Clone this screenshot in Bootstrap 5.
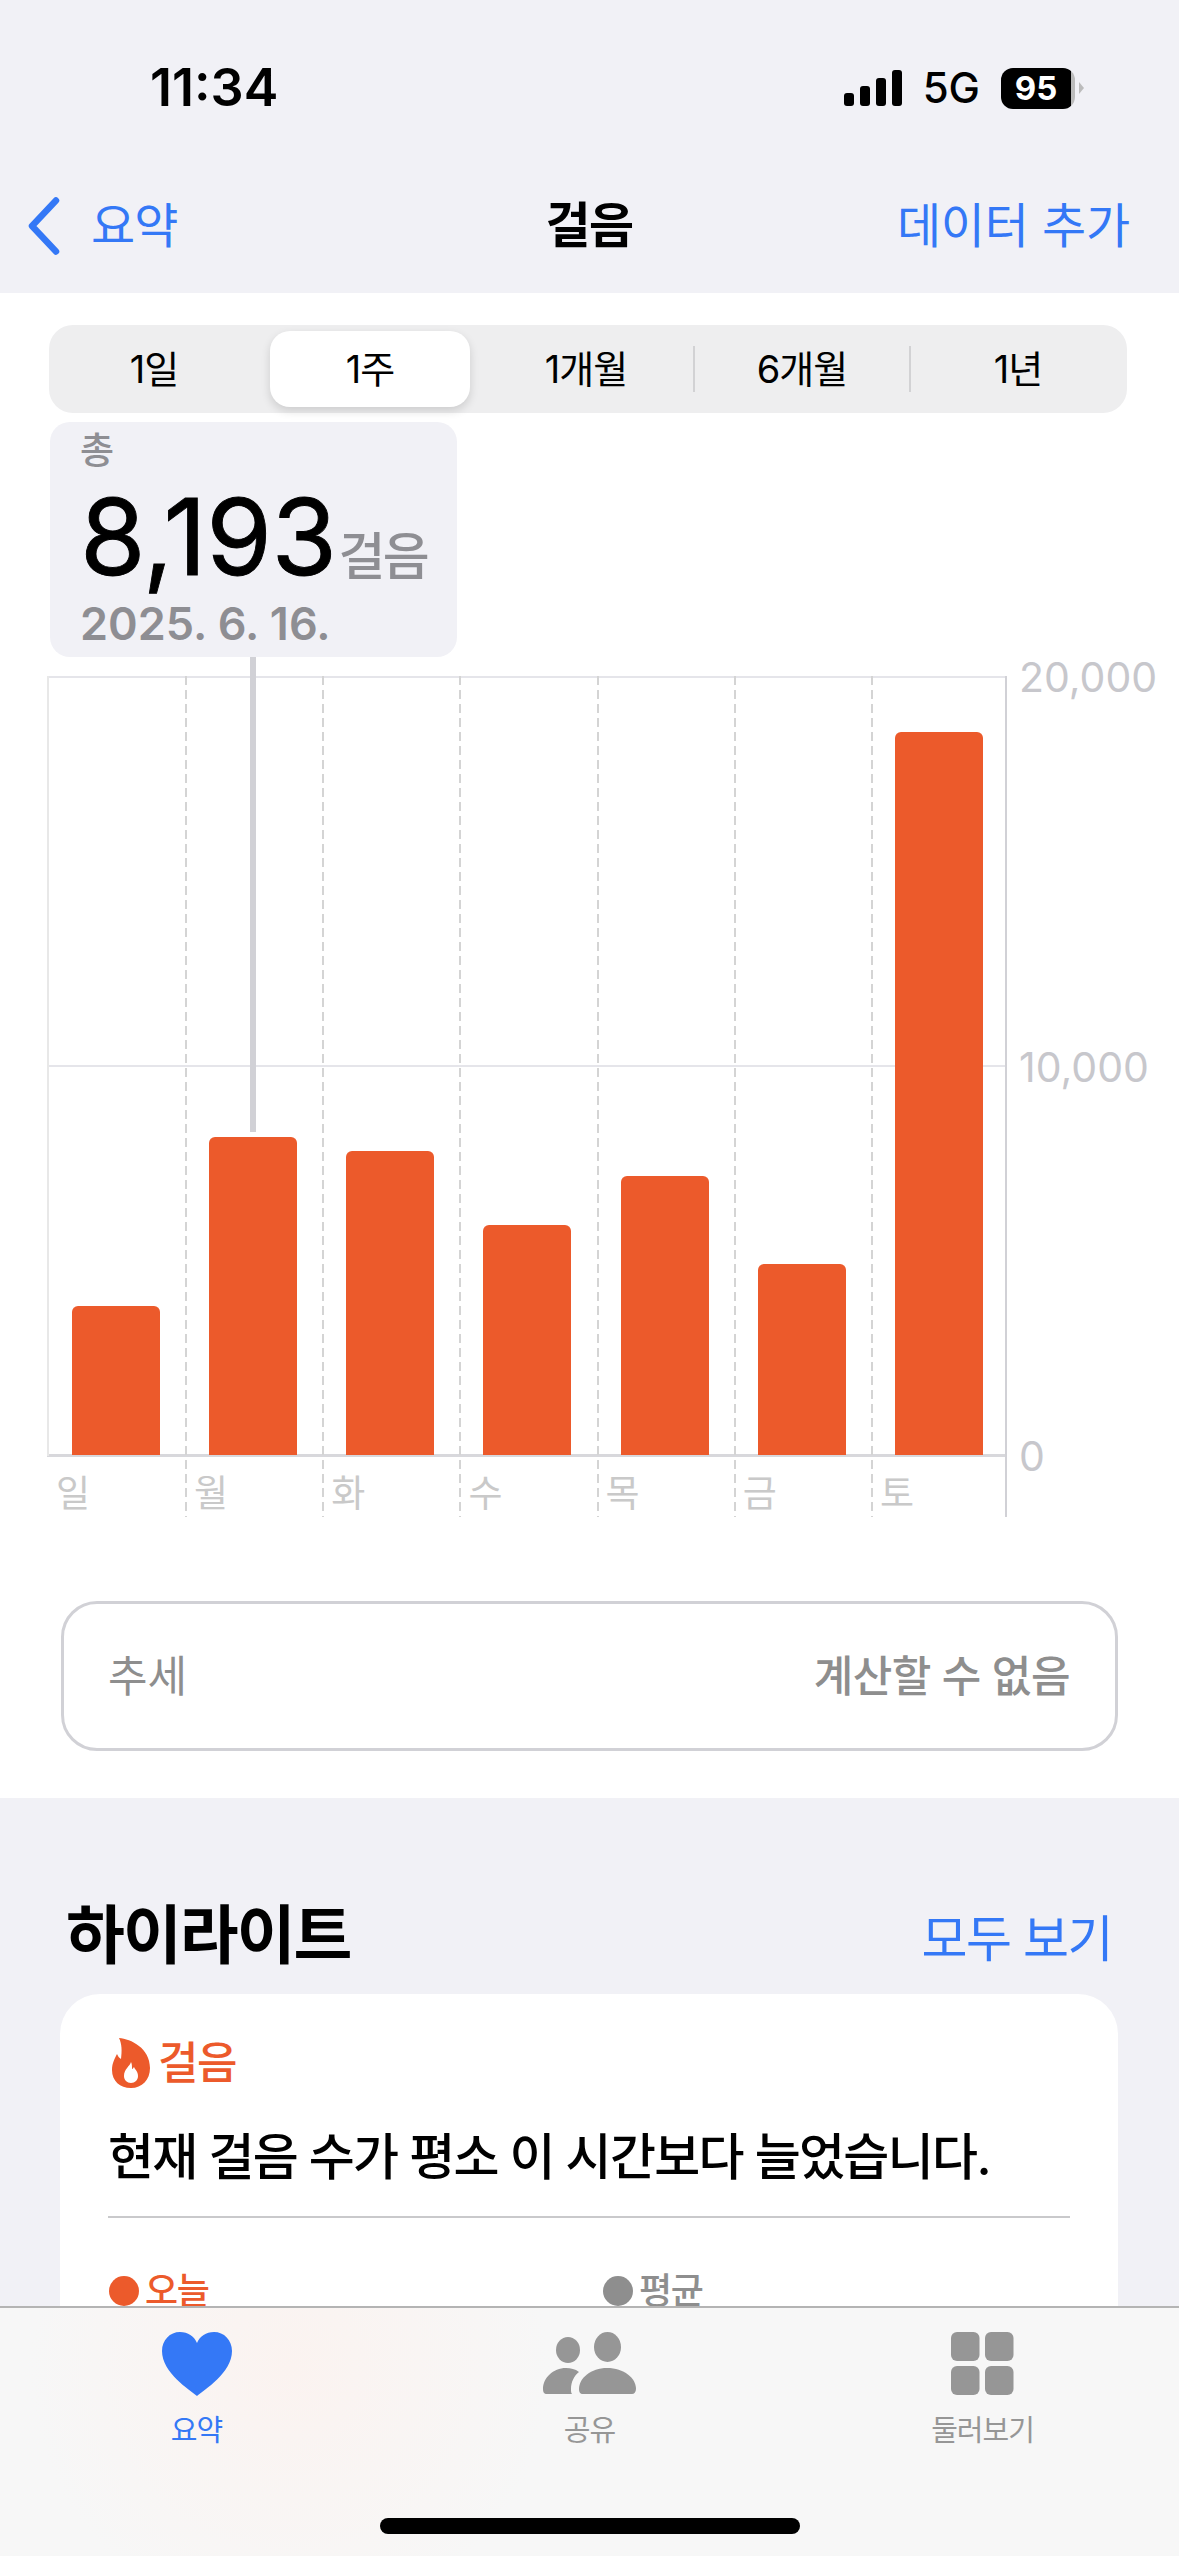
<!doctype html>
<html lang="ko">
<head>
<meta charset="utf-8">
<link href="https://cdn.jsdelivr.net/npm/bootstrap@5.3.0/dist/css/bootstrap.min.css" rel="stylesheet">
<style>
html,body{margin:0;width:1179px;height:2556px;overflow:hidden}
body{background:#f1f1f6;color:#000;font-family:Inter,"Noto Sans CJK KR",sans-serif;position:relative}
.status-row{height:176px;padding:0 95px 0 150px}
.clock{font-size:52px;font-weight:600;letter-spacing:0;line-height:1}
.sig{gap:6px;margin-right:21px}
.sig i{display:block;width:10px;background:#000;border-radius:3px}
.net{font-size:42px;font-weight:500;line-height:1;margin-right:21px}
.batt{width:74px;height:41px;border-radius:12px;background:linear-gradient(90deg,#000 0 70px,#bcbcbc 70px);color:#fff;font-size:33px;font-weight:700;line-height:41px;padding-right:4px;text-align:center}
.batt-tip{width:0;height:0;border-left:5px solid #bcbcbc;border-top:6px solid transparent;border-bottom:6px solid transparent;margin-left:4px}
.navrow{height:117px;padding:0 49px 18px 28px}
.nav-side{flex:1 1 0}
.blue{color:#3478f6}
.nav-txt{font-size:48px;letter-spacing:-.2px;line-height:1}
.nav-back{letter-spacing:-1px}
.nav-title{font-size:49px;font-weight:600;letter-spacing:-1.5px;line-height:1;margin-left:20px}
.chev{margin-right:31px}
.sheet{background:#fff;height:1505px;padding-top:32px}
.seg{width:1078px;height:88px;margin-left:49px;background:#eeeeef;border-radius:24px;position:relative}
.seg-item{width:216px;font-size:38px;letter-spacing:-1px;line-height:1;position:relative;text-align:center}
.seg-item:first-child{margin-left:-3px}
.seg-item.on{background:#fff;border-radius:20px;width:200px;height:76px;margin:0 8px;box-shadow:0 4px 10px rgba(0,0,0,.14)}
.seg-sep{width:2px;height:46px;background:#d2d2d4;flex:none;margin:0 -1px}
.tip{width:407px;height:235px;margin:9px 0 0 50px;background:#f1f1f6;border-radius:20px;padding:9px 0 0 30px}
.tip-lab{font-size:37px;line-height:40px;color:#8e8e93;font-weight:500}
.tip-val{font-size:106px;line-height:100px;margin-top:16px;letter-spacing:-.5px;font-weight:400;white-space:nowrap;-webkit-text-stroke:.9px #000}
.tip-unit{font-size:51px;line-height:40px;color:#8e8e93;font-weight:500;letter-spacing:-2.5px;margin-left:2px;-webkit-text-stroke:0}
.tip-date{font-size:45px;line-height:50px;color:#8e8e93;font-weight:600;margin-top:12px;white-space:nowrap}
.chart{margin:19px 0 0 47px;position:relative;width:1121px;height:841px}
.plot{width:960px;height:841px;position:relative;flex:none}
.plot-top{position:absolute;left:0;top:0;width:100%;height:2px;background:#e5e5ea}
.plot-mid{position:absolute;left:0;top:389px;width:100%;height:2px;background:#e5e5ea}
.plot-base{position:absolute;left:0;top:778px;width:100%;height:3px;background:#d8d8dc;z-index:0}
.plot-end{position:absolute;right:0;top:0;width:2px;height:100%;background:#d1d1d6}
.daycol{width:137.200px;flex:none;height:841px;position:relative;background:repeating-linear-gradient(to bottom,#d4d4d4 0 9px,transparent 9px 14px) left top/2px 100% no-repeat}
.daycol.first{width:138px;background:linear-gradient(#e8e8e8,#e8e8e8) left top/2px 780px no-repeat}
.daycol.first .barslot{padding-left:25px}
.barslot{height:779px;padding-left:24px;position:relative;z-index:1}
.stepbar{width:88px;background:#ec5a2b;border-radius:6px 6px 0 0}
.day-lab{font-size:37px;line-height:36px;color:#c9c9c9;margin:21px 0 0 9px}
.sel-line{position:absolute;left:203px;top:-19px;width:6px;height:475px;background:#d1d1d6;z-index:2}
.yaxis{height:825px;margin:-22px 0 0 12px;font-size:41px;line-height:46px;color:#c7c7cc}
.trend{width:1057px;height:150px;margin:84px 0 0 61px;border:3px solid #d1d1d6;border-radius:36px;padding:0 45px 0 44px;font-size:43px;color:#8e8e8e;background:#fff}
.trend-val{font-weight:500;letter-spacing:-.5px}
.hl-head{padding:105px 67px 0 66px;height:196px}
.hl-title{font-size:64px;font-weight:700;letter-spacing:-2px;line-height:1}
.hl-all{font-size:50px;letter-spacing:-1.5px;line-height:1;margin-top:11px}
.hl-card{width:1058px;height:560px;margin-left:60px;border-radius:40px;background:#fff;border:0;padding:44px 48px 0}
.hl-kind{font-size:44px;font-weight:500;color:#ec5a2b;letter-spacing:-1.5px;line-height:1;gap:7px;margin-left:3px}
.hl-text{font-size:50px;font-weight:500;line-height:1;letter-spacing:-1.65px;margin-top:44px;white-space:nowrap}
.hl-card hr{margin:34px 0 0;border:0;height:2px;background:#c9c9cb;opacity:1}
.leg{font-size:36px;font-weight:500;line-height:1;letter-spacing:-1.4px;gap:6px;margin-top:55px}
.leg i{display:block;width:30px;height:30px;border-radius:50%}
.leg-a{width:494px;color:#ec5a2b;margin-left:1px}
.leg-a i{background:#ec5a2b}
.leg-b{color:#8e8e8e}
.leg-b i{background:#8e8e8e}
.tabbar{position:absolute;left:0;right:0;bottom:0;height:250px;border-top:2px solid #b4b4b4;background:radial-gradient(circle 260px at 290px 60px,#fbf3f0,rgba(251,243,240,0)),#f7f7f7}
.tabcell{width:393px;padding-top:24px}
.tabcell svg{display:block;flex:none}
.tab-lab{font-size:29px;line-height:32px;margin-top:19px;letter-spacing:-1px;color:#969696;font-weight:400}
.tab-lab.blue{color:#3478f6}
.homebar{position:absolute;left:380px;top:210px;width:420px;height:16px;border-radius:8px;background:#000}
</style>
</head>
<body>
<div class="status-row d-flex justify-content-between align-items-center">
  <div class="clock">11:34</div>
  <div class="d-flex align-items-center">
    <div class="sig d-flex align-items-end">
      <i style="height:13px"></i><i style="height:20px"></i><i style="height:28px"></i><i style="height:36px"></i>
    </div>
    <div class="net">5G</div>
    <div class="batt">95</div>
    <div class="batt-tip"></div>
  </div>
</div>
<div class="navrow d-flex align-items-center">
  <div class="nav-side d-flex align-items-center blue">
    <svg class="chev" width="32" height="58" viewBox="0 0 32 58"><path d="M28 3.500 4 29l24 25.500" fill="none" stroke="#3478f6" stroke-width="6.500" stroke-linecap="round" stroke-linejoin="round"/></svg>
    <span class="nav-txt nav-back">요약</span>
  </div>
  <div class="nav-title">걸음</div>
  <div class="nav-side text-end blue nav-txt">데이터 추가</div>
</div>
<main class="sheet">
  <div class="seg d-flex align-items-center">
    <div class="seg-item">1일</div>
    <div class="seg-item on d-flex align-items-center justify-content-center">1주</div>
    <div class="seg-item">1개월</div>
    <div class="seg-sep"></div>
    <div class="seg-item">6개월</div>
    <div class="seg-sep"></div>
    <div class="seg-item">1년</div>
  </div>
  <div class="tip">
    <div class="tip-lab">총</div>
    <div class="tip-val">8,193<span class="tip-unit">걸음</span></div>
    <div class="tip-date">2025. 6. 16.</div>
  </div>
  <div class="chart d-flex">
    <div class="plot d-flex">
      <div class="plot-top"></div><div class="plot-mid"></div><div class="plot-base"></div><div class="plot-end"></div>
      <div class="daycol first"><div class="barslot d-flex align-items-end"><div class="stepbar" style="height:149px"></div></div><div class="day-lab">일</div></div>
      <div class="daycol"><div class="barslot d-flex align-items-end"><div class="stepbar" style="height:318px"></div></div><div class="day-lab">월</div></div>
      <div class="daycol"><div class="barslot d-flex align-items-end"><div class="stepbar" style="height:304px"></div></div><div class="day-lab">화</div></div>
      <div class="daycol"><div class="barslot d-flex align-items-end"><div class="stepbar" style="height:230px"></div></div><div class="day-lab">수</div></div>
      <div class="daycol"><div class="barslot d-flex align-items-end"><div class="stepbar" style="height:279px"></div></div><div class="day-lab">목</div></div>
      <div class="daycol"><div class="barslot d-flex align-items-end"><div class="stepbar" style="height:191px"></div></div><div class="day-lab">금</div></div>
      <div class="daycol"><div class="barslot d-flex align-items-end"><div class="stepbar" style="height:723px"></div></div><div class="day-lab">토</div></div>
    </div>
    <div class="sel-line"></div>
    <div class="yaxis d-flex flex-column justify-content-between"><div>20,000</div><div>10,000</div><div>0</div></div>
  </div>
  <div class="trend card flex-row justify-content-between align-items-center">
    <span>추세</span><span class="trend-val">계산할 수 없음</span>
  </div>
</main>
<section>
  <div class="hl-head d-flex justify-content-between align-items-start">
    <div class="hl-title">하이라이트</div>
    <div class="hl-all blue">모두 보기</div>
  </div>
  <div class="hl-card card">
    <div class="hl-kind d-flex align-items-center">
      <svg width="40" height="50" viewBox="0 0 40 50"><path fill-rule="evenodd" fill="#ec5a2b" d="M8 0c12 1 31 10 31 30 0 12-8 20-19 20S1 43 1 32c0-7 3-12 5-16 1 2 2 4 4 5C11 13 11 6 8 0Zm12 24c-1 4-7 7-7 14 0 4 3 7 7 7s7-3 7-7c0-5-3-6-4-9-1 1-1 2-2 2 0-3 0-5-1-7Z"/></svg>
      <span>걸음</span>
    </div>
    <div class="hl-text">현재 걸음 수가 평소 이 시간보다 늘었습니다.</div>
    <hr>
    <div class="d-flex">
      <div class="leg leg-a d-flex align-items-center"><i></i><span>오늘</span></div>
      <div class="leg leg-b d-flex align-items-center"><i></i><span>평균</span></div>
    </div>
  </div>
</section>
<nav class="tabbar d-flex align-items-start">
  <div class="tabcell d-flex flex-column align-items-center">
    <svg width="70" height="64" viewBox="0 0 70 64"><path fill="#3478f6" d="M35 64C28 58 0 41 0 19 0 8 8 0 18 0c8 0 14 4 17 11C38 4 44 0 52 0c10 0 18 8 18 19 0 22-28 39-35 45Z"/></svg>
    <div class="tab-lab blue">요약</div>
  </div>
  <div class="tabcell d-flex flex-column align-items-center">
    <svg width="96" height="64" viewBox="0 0 96 64"><g fill="#969696"><ellipse cx="26" cy="18" rx="12" ry="13"/><ellipse cx="65.500" cy="15" rx="13.500" ry="15"/><path d="M24 36c5 0 9 1 13 4-5 4-8 10-8 17 0 2 0 4 1 5H5c-3 0-4-2-4-5 0-11 10-21 23-21Z"/><path d="M65 36c17 0 29 10 29 21 0 3-2 5-4 5H41c-3 0-4-2-4-5 0-11 12-21 28-21Z"/></g></svg>
    <div class="tab-lab">공유</div>
  </div>
  <div class="tabcell d-flex flex-column align-items-center">
    <svg width="64" height="64" viewBox="0 0 64 64"><g fill="#969696"><rect width="28.500" height="29" rx="6"/><rect x="34" width="28.500" height="29" rx="6"/><rect y="34" width="28.500" height="29" rx="6"/><rect x="34" y="34" width="28.500" height="29" rx="6"/></g></svg>
    <div class="tab-lab">둘러보기</div>
  </div>
  <div class="homebar"></div>
</nav>
<script src="https://cdn.jsdelivr.net/npm/bootstrap@5.3.0/dist/js/bootstrap.bundle.min.js"></script>
</body>
</html>
